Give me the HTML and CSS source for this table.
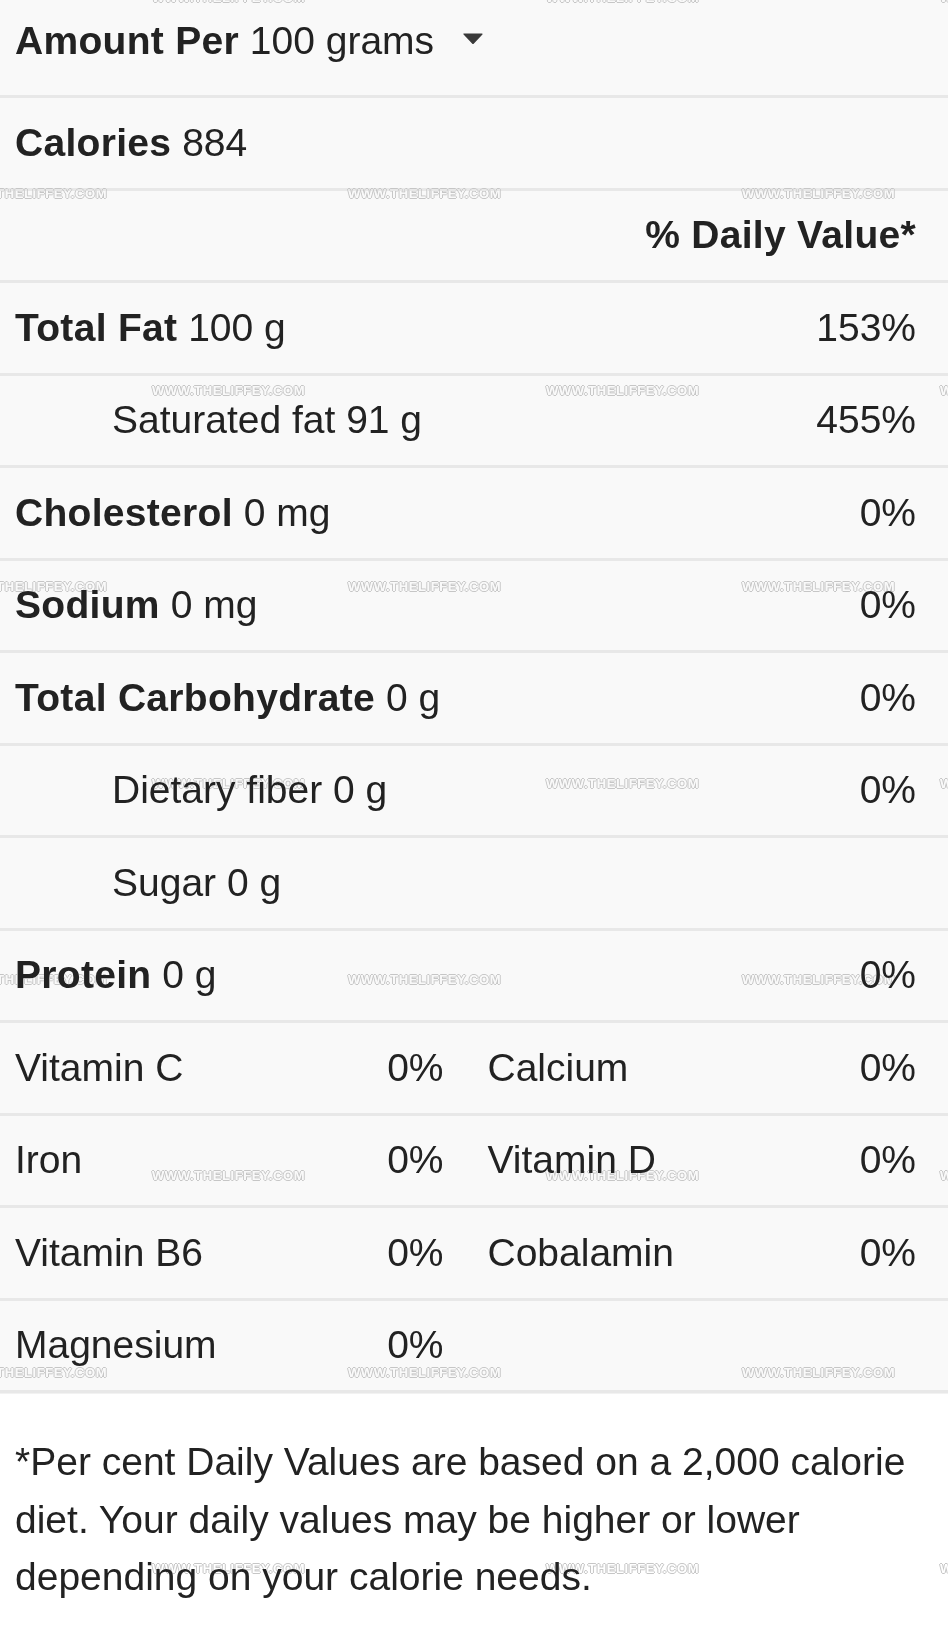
FILE: index.html
```html
<!DOCTYPE html>
<html lang="en">
<head>
<meta charset="utf-8">
<title>Nutrition Facts</title>
<link rel="stylesheet" href="styles.css">
</head>
<body>
<div class="panel">
  <div class="row row-head">
    <span><b>Amount Per</b> 100 grams</span>
    <svg class="caret" width="20" height="11" viewBox="0 0 20 11"><path d="M1 1 L19 1 L10 10.5 Z" fill="#3a3a3a" stroke="#3a3a3a" stroke-width="1.2" stroke-linejoin="round"/></svg>
  </div>
  <div class="row"><span><b>Calories</b> 884</span></div>
  <div class="row row-right"><b>% Daily Value*</b></div>
  <div class="row"><span><b>Total Fat</b> 100 g</span><span>153%</span></div>
  <div class="row sub"><span>Saturated fat 91 g</span><span>455%</span></div>
  <div class="row"><span><b>Cholesterol</b> 0 mg</span><span>0%</span></div>
  <div class="row"><span><b>Sodium</b> 0 mg</span><span>0%</span></div>
  <div class="row"><span><b>Total Carbohydrate</b> 0 g</span><span>0%</span></div>
  <div class="row sub"><span>Dietary fiber 0 g</span><span>0%</span></div>
  <div class="row sub"><span>Sugar 0 g</span></div>
  <div class="row"><span><b>Protein</b> 0 g</span><span>0%</span></div>
  <div class="row vit">
    <div class="cell"><span>Vitamin C</span><span>0%</span></div>
    <div class="cell"><span>Calcium</span><span>0%</span></div>
  </div>
  <div class="row vit">
    <div class="cell"><span>Iron</span><span>0%</span></div>
    <div class="cell"><span>Vitamin D</span><span>0%</span></div>
  </div>
  <div class="row vit">
    <div class="cell"><span>Vitamin B6</span><span>0%</span></div>
    <div class="cell"><span>Cobalamin</span><span>0%</span></div>
  </div>
  <div class="row vit">
    <div class="cell"><span>Magnesium</span><span>0%</span></div>
  </div>
  <p class="note">*Per cent Daily Values are based on a 2,000 calorie diet. Your daily values may be higher or lower depending on your calorie needs.</p>

  <div class="wm-layer" aria-hidden="true">
    <div class="wm-row wm-b"><span>WWW.THELIFFEY.COM</span><span>WWW.THELIFFEY.COM</span><span>WWW.THELIFFEY.COM</span></div>
    <div class="wm-row wm-a"><span>WWW.THELIFFEY.COM</span><span>WWW.THELIFFEY.COM</span><span>WWW.THELIFFEY.COM</span></div>
    <div class="wm-row wm-b"><span>WWW.THELIFFEY.COM</span><span>WWW.THELIFFEY.COM</span><span>WWW.THELIFFEY.COM</span></div>
    <div class="wm-row wm-a"><span>WWW.THELIFFEY.COM</span><span>WWW.THELIFFEY.COM</span><span>WWW.THELIFFEY.COM</span></div>
    <div class="wm-row wm-b"><span>WWW.THELIFFEY.COM</span><span>WWW.THELIFFEY.COM</span><span>WWW.THELIFFEY.COM</span></div>
    <div class="wm-row wm-a"><span>WWW.THELIFFEY.COM</span><span>WWW.THELIFFEY.COM</span><span>WWW.THELIFFEY.COM</span></div>
    <div class="wm-row wm-b"><span>WWW.THELIFFEY.COM</span><span>WWW.THELIFFEY.COM</span><span>WWW.THELIFFEY.COM</span></div>
    <div class="wm-row wm-a"><span>WWW.THELIFFEY.COM</span><span>WWW.THELIFFEY.COM</span><span>WWW.THELIFFEY.COM</span></div>
    <div class="wm-row wm-b"><span>WWW.THELIFFEY.COM</span><span>WWW.THELIFFEY.COM</span><span>WWW.THELIFFEY.COM</span></div>
  </div>
</div>
</body>
</html>
```

FILE: styles.css
```css
html, body {
  margin: 0;
  padding: 0;
  background: #ffffff;
}

.panel {
  position: relative;
  width: 948px;
  min-height: 1626px;
  overflow: hidden;
  font-family: "Liberation Sans", Arial, sans-serif;
  font-size: 39px;
  color: #222222;
  background: #ffffff;
}

.row {
  box-sizing: border-box;
  height: 92.5px;
  display: flex;
  align-items: center;
  justify-content: space-between;
  padding: 0 32px 0 15px;
  background: #f9f9f9;
  border-bottom: 3px solid #e8e8e8;
  white-space: nowrap;
}

.row b {
  font-weight: 700;
  letter-spacing: 0.3px;
}

.row-head {
  height: 98px;
  padding-bottom: 14px;
  justify-content: flex-start;
}

.caret {
  margin-left: 29px;
  margin-bottom: 4px;
  flex: none;
}

.row-right {
  justify-content: flex-end;
}

.sub {
  padding-left: 112px;
}

.vit {
  display: grid;
  grid-template-columns: 1fr 1fr;
  column-gap: 44px;
  align-items: center;
}

.cell {
  display: flex;
  justify-content: space-between;
}

.note {
  margin: 0;
  padding: 39px 32px 0 15px;
  line-height: 57.5px;
  border-top: 1px solid #f2f2f2;
  background: #ffffff;
}

/* watermark overlay */
.wm-layer {
  position: absolute;
  top: -8px;
  left: 0;
  right: 0;
  bottom: 0;
  pointer-events: none;
  z-index: 2;
  mix-blend-mode: darken;
}

.wm-row {
  display: flex;
  gap: 237px;
  height: 196.4px;
  line-height: 12px;
  font-size: 13px;
  font-weight: 700;
  letter-spacing: 0.6px;
  color: #ffffff;
  text-shadow: 1px 0 0 #c6c6c6, -1px 0 0 #c6c6c6, 0 1px 0 #c6c6c6, 0 -1px 0 #c6c6c6;
  white-space: nowrap;
}

.wm-row span {
  flex: none;
  width: 157px;
}

.wm-a {
  margin-left: -46px;
}

.wm-b {
  margin-left: 152px;
}
```
